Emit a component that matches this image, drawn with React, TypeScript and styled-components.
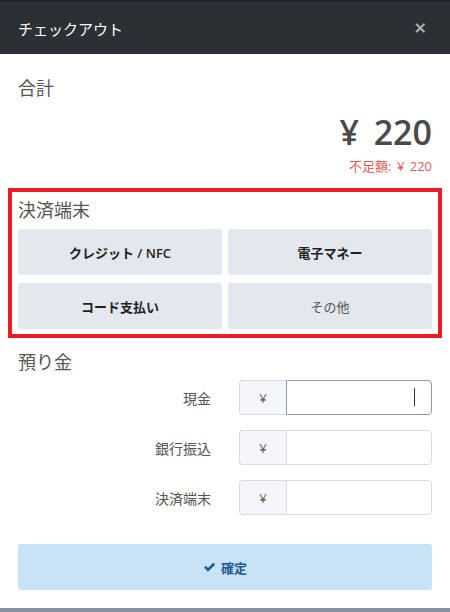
import { FC } from "react";
import styled, { createGlobalStyle } from "styled-components";

const GlobalStyle = createGlobalStyle`
  html, body {
    margin: 0;
    padding: 0;
    background: #fff;
  }
  body {
    font-family: "Open Sans", "Noto Sans CJK JP", sans-serif;
    color: #555;
  }
  * {
    box-sizing: border-box;
  }
`;

const Modal = styled.div`
  width: 450px;
  height: 612px;
  display: flex;
  flex-direction: column;
  border-top: 2px solid #1b2632;
  overflow: hidden;
`;

const Header = styled.div`
  height: 52px;
  flex: none;
  display: flex;
  align-items: center;
  justify-content: space-between;
  padding: 0 18px;
  background: #2c3034;
`;

const Title = styled.h1`
  margin: 0;
  font-size: 15px;
  font-weight: 400;
  color: #fff;
`;

const CloseButton = styled.button`
  border: none;
  background: none;
  padding: 0 5px 0 0;
  color: #b3b7bc;
  font-size: 16px;
  line-height: 1;
  font-family: "DejaVu Sans", sans-serif;
  font-weight: 700;
  cursor: pointer;
`;

const Body = styled.div`
  flex: 1;
  display: flex;
  flex-direction: column;
  padding: 22px 18px 0;
`;

const Heading = styled.h2`
  margin: 0;
  font-size: 18px;
  font-weight: 400;
  line-height: 24px;
  color: #555;
`;

const Amount = styled.div`
  margin-top: 12px;
  text-align: right;
  font-size: 34px;
  font-weight: 600;
  line-height: 40px;
  word-spacing: 6px;
  color: #4a4a4a;
`;

const Shortfall = styled.div`
  margin-top: 6px;
  text-align: right;
  font-size: 13px;
  line-height: 16px;
  word-spacing: 2px;
  color: #f05a5a;
`;

const Highlight = styled.section`
  margin: 14px -10px 0;
  padding: 6px 6px 5px;
  border: 4px solid #ed1c24;
`;

const MethodGrid = styled.div`
  margin-top: 7px;
  display: grid;
  grid-template-columns: 1fr 1fr;
  column-gap: 6px;
  row-gap: 8px;
`;

const MethodButton = styled.button<{ $muted?: boolean }>`
  height: 46px;
  border: none;
  border-radius: 3px;
  background: #e4e7ee;
  font-family: inherit;
  font-size: 13px;
  font-weight: ${(p) => (p.$muted ? 400 : 600)};
  color: ${(p) => (p.$muted ? "#555" : "#222")};
  cursor: pointer;
`;

const DepositHeading = styled(Heading)`
  margin-top: 12px;
`;

const Fields = styled.div`
  margin-top: 6px;
  display: flex;
  flex-direction: column;
  gap: 15px;
`;

const FieldRow = styled.div`
  display: grid;
  grid-template-columns: 193px 193px;
  justify-content: space-between;
  align-items: center;
`;

const Label = styled.label`
  text-align: right;
  font-size: 14px;
  font-weight: 400;
  color: #555;
`;

const InputGroup = styled.div`
  position: relative;
  display: flex;
  height: 35px;
`;

const Prefix = styled.span`
  width: 47px;
  flex: none;
  display: flex;
  align-items: center;
  justify-content: center;
  background: #f4f6f9;
  border: 1px solid #d6dbe4;
  border-right: none;
  border-radius: 4px 0 0 4px;
  font-size: 13px;
  color: #666;
`;

const Input = styled.input<{ $focused?: boolean }>`
  flex: 1;
  min-width: 0;
  border: 1px solid ${(p) => (p.$focused ? "#8d9bb5" : "#d6dbe4")};
  border-radius: 0 4px 4px 0;
  outline: none;
  padding: 0 12px;
  text-align: right;
  font-family: inherit;
  font-size: 13px;
  background: #fff;
`;

const Caret = styled.span`
  position: absolute;
  right: 17px;
  top: 8px;
  width: 1px;
  height: 18px;
  background: #333;
`;

const ConfirmButton = styled.button`
  margin-top: 29px;
  height: 46px;
  width: 100%;
  border: none;
  border-radius: 3px;
  background: #c8e2f6;
  display: flex;
  align-items: center;
  justify-content: center;
  gap: 5px;
  font-family: inherit;
  font-size: 13px;
  font-weight: 600;
  color: #1e5c92;
  cursor: pointer;
`;

const FooterStrip = styled.div`
  margin-top: auto;
  height: 4px;
  flex: none;
  background: #87919b;
`;

const CheckIcon: FC = () => (
  <svg width="13" height="11" viewBox="0 0 13 11" aria-hidden>
    <path
      d="M1 5.6 L2.9 3.8 L5 5.9 L10.2 0.8 L12.1 2.7 L5 9.8 Z"
      fill="#1e5c92"
    />
  </svg>
);

const methods = [
  { label: "クレジット / NFC" },
  { label: "電子マネー" },
  { label: "コード支払い" },
  { label: "その他", muted: true },
];

const deposits = ["現金", "銀行振込", "決済端末"];

export default function App() {
  return (
    <>
      <GlobalStyle />
      <Modal>
        <Header>
          <Title>チェックアウト</Title>
          <CloseButton aria-label="close">×</CloseButton>
        </Header>
        <Body>
          <Heading>合計</Heading>
          <Amount>¥ 220</Amount>
          <Shortfall>不足額: ¥ 220</Shortfall>

          <Highlight>
            <Heading>決済端末</Heading>
            <MethodGrid>
              {methods.map((m) => (
                <MethodButton key={m.label} $muted={m.muted}>
                  {m.label}
                </MethodButton>
              ))}
            </MethodGrid>
          </Highlight>

          <DepositHeading>預り金</DepositHeading>
          <Fields>
            {deposits.map((name, i) => (
              <FieldRow key={name}>
                <Label>{name}</Label>
                <InputGroup>
                  <Prefix>¥</Prefix>
                  <Input type="text" $focused={i === 0} />
                  {i === 0 && <Caret />}
                </InputGroup>
              </FieldRow>
            ))}
          </Fields>

          <ConfirmButton>
            <CheckIcon />
            確定
          </ConfirmButton>
        </Body>
        <FooterStrip />
      </Modal>
    </>
  );
}
